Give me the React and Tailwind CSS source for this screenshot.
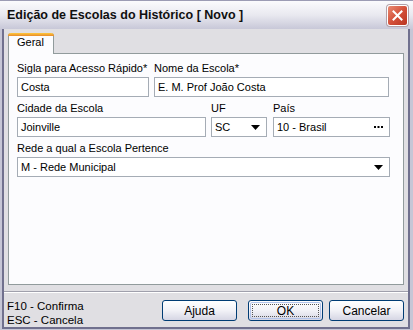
import React from "react";

const font = { fontFamily: '"Liberation Sans", Arial, sans-serif' };

function Label({ children }) {
  return <div className="text-[11px] leading-[13px] text-black h-[13px] mb-[2px] whitespace-nowrap">{children}</div>;
}

function Box({ w, children, right }) {
  return (
    <div
      className="h-[20px] border border-[#a5acb5] bg-white flex items-center pl-[3px] pr-[4px] text-[11px] text-black"
      style={{ width: w }}
    >
      <span className="flex-1 whitespace-nowrap">{children}</span>
      {right}
    </div>
  );
}

const Arrow = () => (
  <svg width="9" height="5" viewBox="0 0 9 5" className="mr-[2px]">
    <polygon points="0,0 9,0 4.5,5" fill="#000" />
  </svg>
);

const Dots = () => (
  <svg width="9" height="2" viewBox="0 0 9 2" className="mr-[2px]">
    <rect x="0" y="0" width="2" height="2" fill="#000" />
    <rect x="3.5" y="0" width="2" height="2" fill="#000" />
    <rect x="7" y="0" width="2" height="2" fill="#000" />
  </svg>
);

function Btn({ children, focus }) {
  return (
    <div className="w-[75px] h-[21px] rounded-[3px] border border-[#003c74] bg-gradient-to-b from-[#ffffff] via-[#f2f2f7] to-[#d6d6e4] flex items-center justify-center text-[12px] text-black">
      {focus ? (
        <div className="w-[71px] h-[17px] border border-[#b3c4ea] rounded-[2px] flex items-center justify-center">
          <div className="w-[67px] h-[13px] border border-dotted border-[#555] flex items-center justify-center">
            {children}
          </div>
        </div>
      ) : (
        children
      )}
    </div>
  );
}

export default function App() {
  return (
    <div className="w-[413px] h-[330px] flex flex-col bg-[#c6c6d6] overflow-hidden" style={font}>
      {/* title bar */}
      <div className="h-[29px] shrink-0 flex items-center justify-between pl-[7px] pr-[5px] border-t border-[#9c9cb4] bg-gradient-to-b from-[#fbfbfd] via-[#e9e9f0] to-[#c8c8d8]">
        <div className="text-[12.5px] font-bold text-[#101010] whitespace-nowrap">
          Edição de Escolas do Histórico [ Novo ]
        </div>
        <div className="w-[21px] h-[21px] rounded-[3px] border border-white bg-gradient-to-br from-[#e88a72] via-[#d4503a] to-[#b93420] flex items-center justify-center shadow-[0_0_0_1px_#b0a0a8]">
          <svg width="11" height="11" viewBox="0 0 11 11">
            <path d="M1.5 1.5 L9.5 9.5 M9.5 1.5 L1.5 9.5" stroke="#fff" strokeWidth="2" strokeLinecap="square" />
          </svg>
        </div>
      </div>
      {/* frame */}
      <div className="flex-1 flex flex-col pl-[2px] pr-[3px] pb-[2px]">
        <div className="flex-1 flex flex-col border-l-[2px] border-r-[2px] border-b-[2px] border-[#70708e] bg-[#e0dfe3]">
          <div className="px-[4px] pt-[4px]">
            {/* tab */}
            <div className="flex">
              <div className="w-[46px] h-[21px] relative bg-[#fcfcfe] border-l border-r border-[#919b9c] rounded-t-[3px] -mb-px z-10 flex items-end pb-[4px] pl-[8px] text-[11px]">
                <div className="absolute left-[-1px] right-[-1px] top-0 h-[3px] rounded-t-[3px] bg-gradient-to-b from-[#ffc83c] to-[#e68b2c]" />
                Geral
              </div>
            </div>
            {/* panel */}
            <div className="h-[232px] border border-[#919b9c] bg-[#fcfcfe] pl-[8px] pt-[8px]">
              <div className="flex gap-[5px]">
                <div>
                  <Label>Sigla para Acesso Rápido*</Label>
                  <Box w={132}>Costa</Box>
                </div>
                <div>
                  <Label>Nome da Escola*</Label>
                  <Box w={235}>E. M. Prof João Costa</Box>
                </div>
              </div>
              <div className="flex gap-[5px] mt-[5px]">
                <div>
                  <Label>Cidade da Escola</Label>
                  <Box w={189}>Joinville</Box>
                </div>
                <div>
                  <Label>UF</Label>
                  <Box w={56} right={<Arrow />}>SC</Box>
                </div>
                <div className="ml-[1px]">
                  <Label>País</Label>
                  <Box w={117} right={<Dots />}>10 - Brasil</Box>
                </div>
              </div>
              <div className="mt-[5px]">
                <Label>Rede a qual a Escola Pertence</Label>
                <Box w={373} right={<Arrow />}>M - Rede Municipal</Box>
              </div>
            </div>
          </div>
          {/* separator */}
          <div className="mt-[6px] h-[2px] border-t border-[#a0a0ac] border-b border-b-white" />
          {/* footer */}
          <div className="flex items-start pl-[3px] pr-[3px] pt-[6px]">
            <div className="flex-1 text-[11.5px] leading-[14px] text-black">
              <div>F10 - Confirma</div>
              <div>ESC - Cancela</div>
            </div>
            <div className="flex gap-[11px] mt-[1px] pr-px">
              <Btn>Ajuda</Btn>
              <div className="flex gap-[6px]">
                <Btn focus>OK</Btn>
                <Btn>Cancelar</Btn>
              </div>
            </div>
          </div>
        </div>
      </div>
    </div>
  );
}
